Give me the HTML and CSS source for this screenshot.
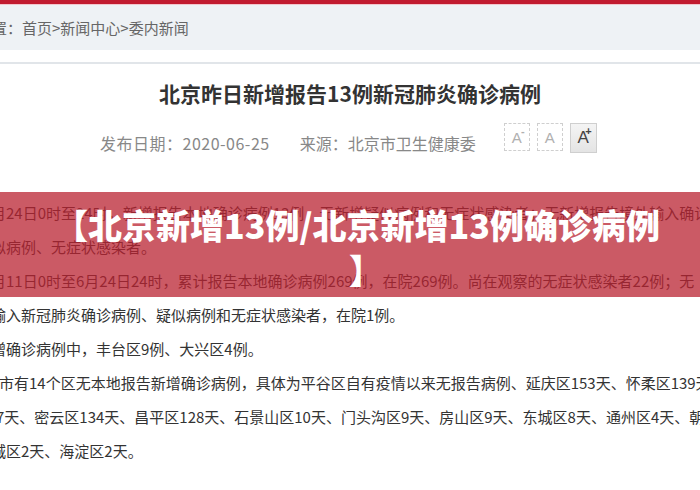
FILE: index.html
```html
<!DOCTYPE html>
<html lang="zh-CN">
<head>
<meta charset="UTF-8">
<meta name="viewport" content="width=device-width, initial-scale=1.0">
<title>北京新增13例确诊病例</title>
<link rel="stylesheet" href="styles.css">
</head>
<body>
<div class="topbar"></div>
<div class="crumbs">
    <span class="crumbs-text">置：首页&gt;新闻中心&gt;委内新闻</span>
</div>
<div class="rule"></div>

<div class="article">
    <h1 class="title">北京昨日新增报告13例新冠肺炎确诊病例</h1>
    <div class="meta">
        <span class="meta-item meta-date">发布日期：2020-06-25</span>
        <span class="meta-item">来源：北京市卫生健康委</span>
        <div class="font-tools">
            <span class="fs">A<i>-</i></span>
            <span class="fs">A</span>
            <span class="fs fs-on">A<i>+</i></span>
        </div>
    </div>
    <div class="content">
        <div class="line">月24日0时至24时，新增报告本地确诊病例13例，无新增疑似病例和无症状感染者；无新增报告境外输入确诊病例</div>
        <div class="line">似病例、无症状感染者。</div>
        <div class="line">月11日0时至6月24日24时，累计报告本地确诊病例269例，在院269例。尚在观察的无症状感染者22例；无</div>
        <div class="line">输入新冠肺炎确诊病例、疑似病例和无症状感染者，在院1例。</div>
        <div class="line">增确诊病例中，丰台区9例、大兴区4例。</div>
        <div class="line line-in">市有14个区无本地报告新增确诊病例，具体为平谷区自有疫情以来无报告病例、延庆区153天、怀柔区139天</div>
        <div class="line line-half">7天、密云区134天、昌平区128天、石景山区10天、门头沟区9天、房山区9天、东城区8天、通州区4天、朝阳区</div>
        <div class="line">城区2天、海淀区2天。</div>
    </div>
</div>

<!-- headline banner laid over the article -->
<div class="banner">【北京新增13例/北京新增13例确诊病例<br><span class="banner-end">】</span></div>
</body>
</html>
```

FILE: styles.css
```css
html, body {
    margin: 0;
    padding: 0;
    overflow: hidden;
}
body {
    width: 700px;
    height: 490px;
    position: relative;
    background-color: #fff;
    font-family: "Noto Sans CJK SC", "Liberation Sans", sans-serif;
    color: #333;
}
.topbar {
    height: 4px;
    background-color: #c11b2f;
    border-bottom: 1px solid #f2c6cc;
}
.crumbs {
    height: 45px;
    background-color: #eef2f5;
    display: flex;
    align-items: center;
}
.crumbs-text {
    margin-left: -8px;
    font-size: 15px;
    color: #666;
    white-space: nowrap;
}
.rule {
    margin-top: 12px;
    height: 2px;
    background-color: #e1e5e9;
}
.article {
    width: 700px;
}
.title {
    margin: 14px 0 0;
    text-align: center;
    font-size: 21px;
    line-height: 30px;
    font-weight: bold;
    color: #333;
}
.meta {
    margin-top: 20px;
    height: 30px;
    display: flex;
    align-items: center;
    padding-left: 100px;
    font-size: 16px;
    color: #888;
    white-space: nowrap;
}
.meta-item {
    margin-right: 30px;
}
.meta-date {
    letter-spacing: 0.5px;
}
.font-tools {
    display: flex;
    gap: 7px;
    margin-left: -2px;
    margin-top: -10px;
}
.fs {
    position: relative;
    width: 24px;
    height: 26px;
    border: 1px dashed #cfcfcf;
    display: flex;
    align-items: center;
    justify-content: center;
    font-family: "Liberation Sans", sans-serif;
    font-size: 15px;
    color: #b0b0b0;
}
.fs i {
    position: absolute;
    top: 1px;
    right: 4px;
    font-style: normal;
    font-size: 11px;
    font-weight: bold;
}
.fs-on {
    width: 25px;
    height: 28px;
    border: 1px solid #cfcfcf;
    background: linear-gradient(#f4f4f4, #e4e4e4);
    color: #444;
    font-size: 17px;
}
.content {
    margin-top: 38px;
    margin-left: -9px;
    font-size: 15px;
    line-height: 34px;
    color: #333;
    white-space: nowrap;
}
.line-in {
    margin-left: 8px;
}
.line-half {
    margin-left: 5px;
}
.banner {
    position: absolute;
    left: 0;
    top: 192px;
    width: 700px;
    height: 105px;
    box-sizing: border-box;
    padding: 10px 0 0 14px;
    background-color: rgba(185, 35, 50, 0.75);
    color: #fff;
    text-align: center;
    font-size: 34px;
    line-height: 45px;
    font-weight: 900;
    white-space: nowrap;
}
.banner-end {
    margin-left: 18px;
}
```
